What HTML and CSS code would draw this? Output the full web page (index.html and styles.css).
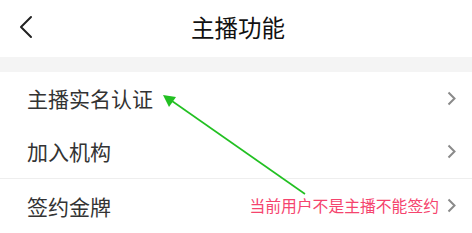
FILE: index.html
```html
<!DOCTYPE html>
<html lang="zh">
<head>
<meta charset="utf-8">
<link rel="stylesheet" href="styles.css">
</head>
<body>
<div class="page">
  <header class="navbar">
    <svg class="back" width="14" height="24" viewBox="0 0 14 24"><path d="M12 2 L2 12 L12 22" fill="none" stroke="#222" stroke-width="2" stroke-linecap="round" stroke-linejoin="round"/></svg>
    <h1 class="title">主播功能</h1>
  </header>
  <div class="gap"></div>
  <ul class="list">
    <li class="row"><span class="label">主播实名认证</span><span class="right"><svg class="chev" width="9" height="15" viewBox="0 0 9 15"><path d="M1.5 1.5 L7.5 7.5 L1.5 13.5" fill="none" stroke="#8a8a8a" stroke-width="2"/></svg></span></li>
    <li class="row"><span class="label">加入机构</span><span class="right"><svg class="chev" width="9" height="15" viewBox="0 0 9 15"><path d="M1.5 1.5 L7.5 7.5 L1.5 13.5" fill="none" stroke="#8a8a8a" stroke-width="2"/></svg></span></li>
    <li class="row sep"><span class="label">签约金牌</span><span class="right"><span class="note">当前用户不是主播不能签约</span><svg class="chev" width="9" height="15" viewBox="0 0 9 15"><path d="M1.5 1.5 L7.5 7.5 L1.5 13.5" fill="none" stroke="#8a8a8a" stroke-width="2"/></svg></span></li>
  </ul>
  <svg class="annot" width="472" height="233" viewBox="0 0 472 233">
    <line x1="305" y1="194" x2="172" y2="101" stroke="#22c022" stroke-width="1.6"/>
    <polygon points="163,95 176,97 169,107" fill="#22c022"/>
  </svg>
</div>
</body>
</html>
```

FILE: styles.css
```css
* { box-sizing: border-box; }
html, body { margin: 0; padding: 0; background: #fff; }
body { font-family: "Noto Sans CJK SC", "Noto Sans", sans-serif; color: #333; }
.page { position: relative; width: 472px; height: 233px; overflow: hidden; }
.navbar { height: 57px; display: flex; align-items: center; justify-content: center; position: relative; background: #fff; }
.back { position: absolute; left: 19px; top: 15px; }
.title { margin: 0; font-size: 23.5px; font-weight: 400; color: #111; line-height: 1; padding-bottom: 2px; padding-left: 4px; }
.gap { height: 15px; background: #f4f4f4; }
.list { list-style: none; margin: 0; padding: 0; }
.row { height: 53px; display: flex; align-items: center; justify-content: space-between; padding: 0 16px 0 27px; }
.row.sep { border-top: 1px solid #eeeeee; height: 55px; }
.label { font-size: 21px; color: #333; line-height: 1; }
.right { display: flex; align-items: center; gap: 8px; }
.note { font-size: 15.8px; color: #f5446e; line-height: 1; }
.chev { display: block; }
.annot { position: absolute; left: 0; top: 0; pointer-events: none; }
```
